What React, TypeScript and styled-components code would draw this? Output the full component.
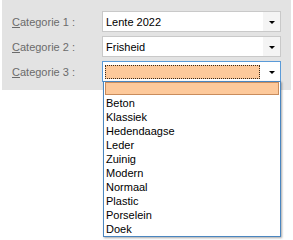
import React from "react";
import styled, { createGlobalStyle } from "styled-components";

const GlobalStyle = createGlobalStyle`
  html, body { margin: 0; padding: 0; background: #ffffff; }
  body { font-family: "Liberation Sans", Arial, sans-serif; font-size: 11px; }
  #root { min-height: 240px; }
`;

const Page = styled.div`
  position: relative;
  width: 293px;
  height: 240px;
  background: #ffffff;
`;

const Panel = styled.div`
  position: relative;
  margin-left: 2px;
  width: 289px;
  height: 90px;
  box-sizing: border-box;
  background: #e3e3e3;
  padding: 11px 0 0 10px;
  display: grid;
  grid-template-columns: 90px 179px;
  grid-auto-rows: 21px;
  row-gap: 4px;
`;

const Label = styled.div`
  display: flex;
  align-items: center;
  color: #6b6b6b;
  font-size: 11px;
  white-space: pre;
`;

const Combo = styled.div<{ $focused?: boolean }>`
  position: relative;
  display: flex;
  align-items: stretch;
  box-sizing: border-box;
  background: #ffffff;
  border: 1px solid ${(p) => (p.$focused ? "#5b9bd8" : "#c9c9c9")};
`;

const ComboText = styled.div`
  flex: 1;
  display: flex;
  align-items: center;
  padding-left: 3px;
  color: #000;
  font-size: 11px;
`;

const FocusField = styled.div`
  flex: 1;
  margin: 3px 2px 2px 2px;
  border: 1px dotted #3a2a1a;
  background: #fdc99b;
`;

const ArrowButton = styled.div<{ $focused?: boolean }>`
  width: 17px;
  display: flex;
  align-items: center;
  justify-content: center;
  background: ${(p) => (p.$focused ? "#ffffff" : "#f4f4f4")};
  margin-left: ${(p) => (p.$focused ? "1px" : "0")};
`;

const Triangle = styled.div`
  width: 0;
  height: 0;
  border-left: 3px solid transparent;
  border-right: 3px solid transparent;
  border-top: 3px solid #000;
  margin-top: 1px;
`;

const DropList = styled.div`
  position: absolute;
  top: 100%;
  left: 0;
  right: -1px;
  box-sizing: border-box;
  background: #fff;
  border: 1px solid #4a86c0;
  box-shadow: 1px 1px 2px rgba(0, 0, 0, 0.35);
  display: flex;
  flex-direction: column;
  z-index: 10;
`;

const Item = styled.div<{ $selected?: boolean }>`
  flex: none;
  height: ${(p) => (p.$selected ? "13px" : "14px")};
  line-height: 14px;
  box-sizing: border-box;
  padding-left: 2px;
  color: #000;
  font-size: 11px;
  margin: ${(p) => (p.$selected ? "0 1px 1px" : "0")};
  background: ${(p) => (p.$selected ? "#fdc99b" : "transparent")};
  border: ${(p) => (p.$selected ? "1px solid #c98c5c" : "none")};
`;

const items = [
  "Beton",
  "Klassiek",
  "Hedendaagse",
  "Leder",
  "Zuinig",
  "Modern",
  "Normaal",
  "Plastic",
  "Porselein",
  "Doek",
];

const CatLabel = ({ n }: { n: number }) => (
  <Label>
    <span>
      <u>C</u>
      {`ategorie ${n} :`}
    </span>
  </Label>
);

export default function App() {
  return (
    <Page>
      <GlobalStyle />
      <Panel>
        <CatLabel n={1} />
        <Combo>
          <ComboText>Lente 2022</ComboText>
          <ArrowButton>
            <Triangle />
          </ArrowButton>
        </Combo>
        <CatLabel n={2} />
        <Combo>
          <ComboText>Frisheid</ComboText>
          <ArrowButton>
            <Triangle />
          </ArrowButton>
        </Combo>
        <CatLabel n={3} />
        <Combo $focused>
          <FocusField />
          <ArrowButton $focused>
            <Triangle />
          </ArrowButton>
          <DropList>
            <Item $selected />
            {items.map((it) => (
              <Item key={it}>{it}</Item>
            ))}
          </DropList>
        </Combo>
      </Panel>
    </Page>
  );
}
